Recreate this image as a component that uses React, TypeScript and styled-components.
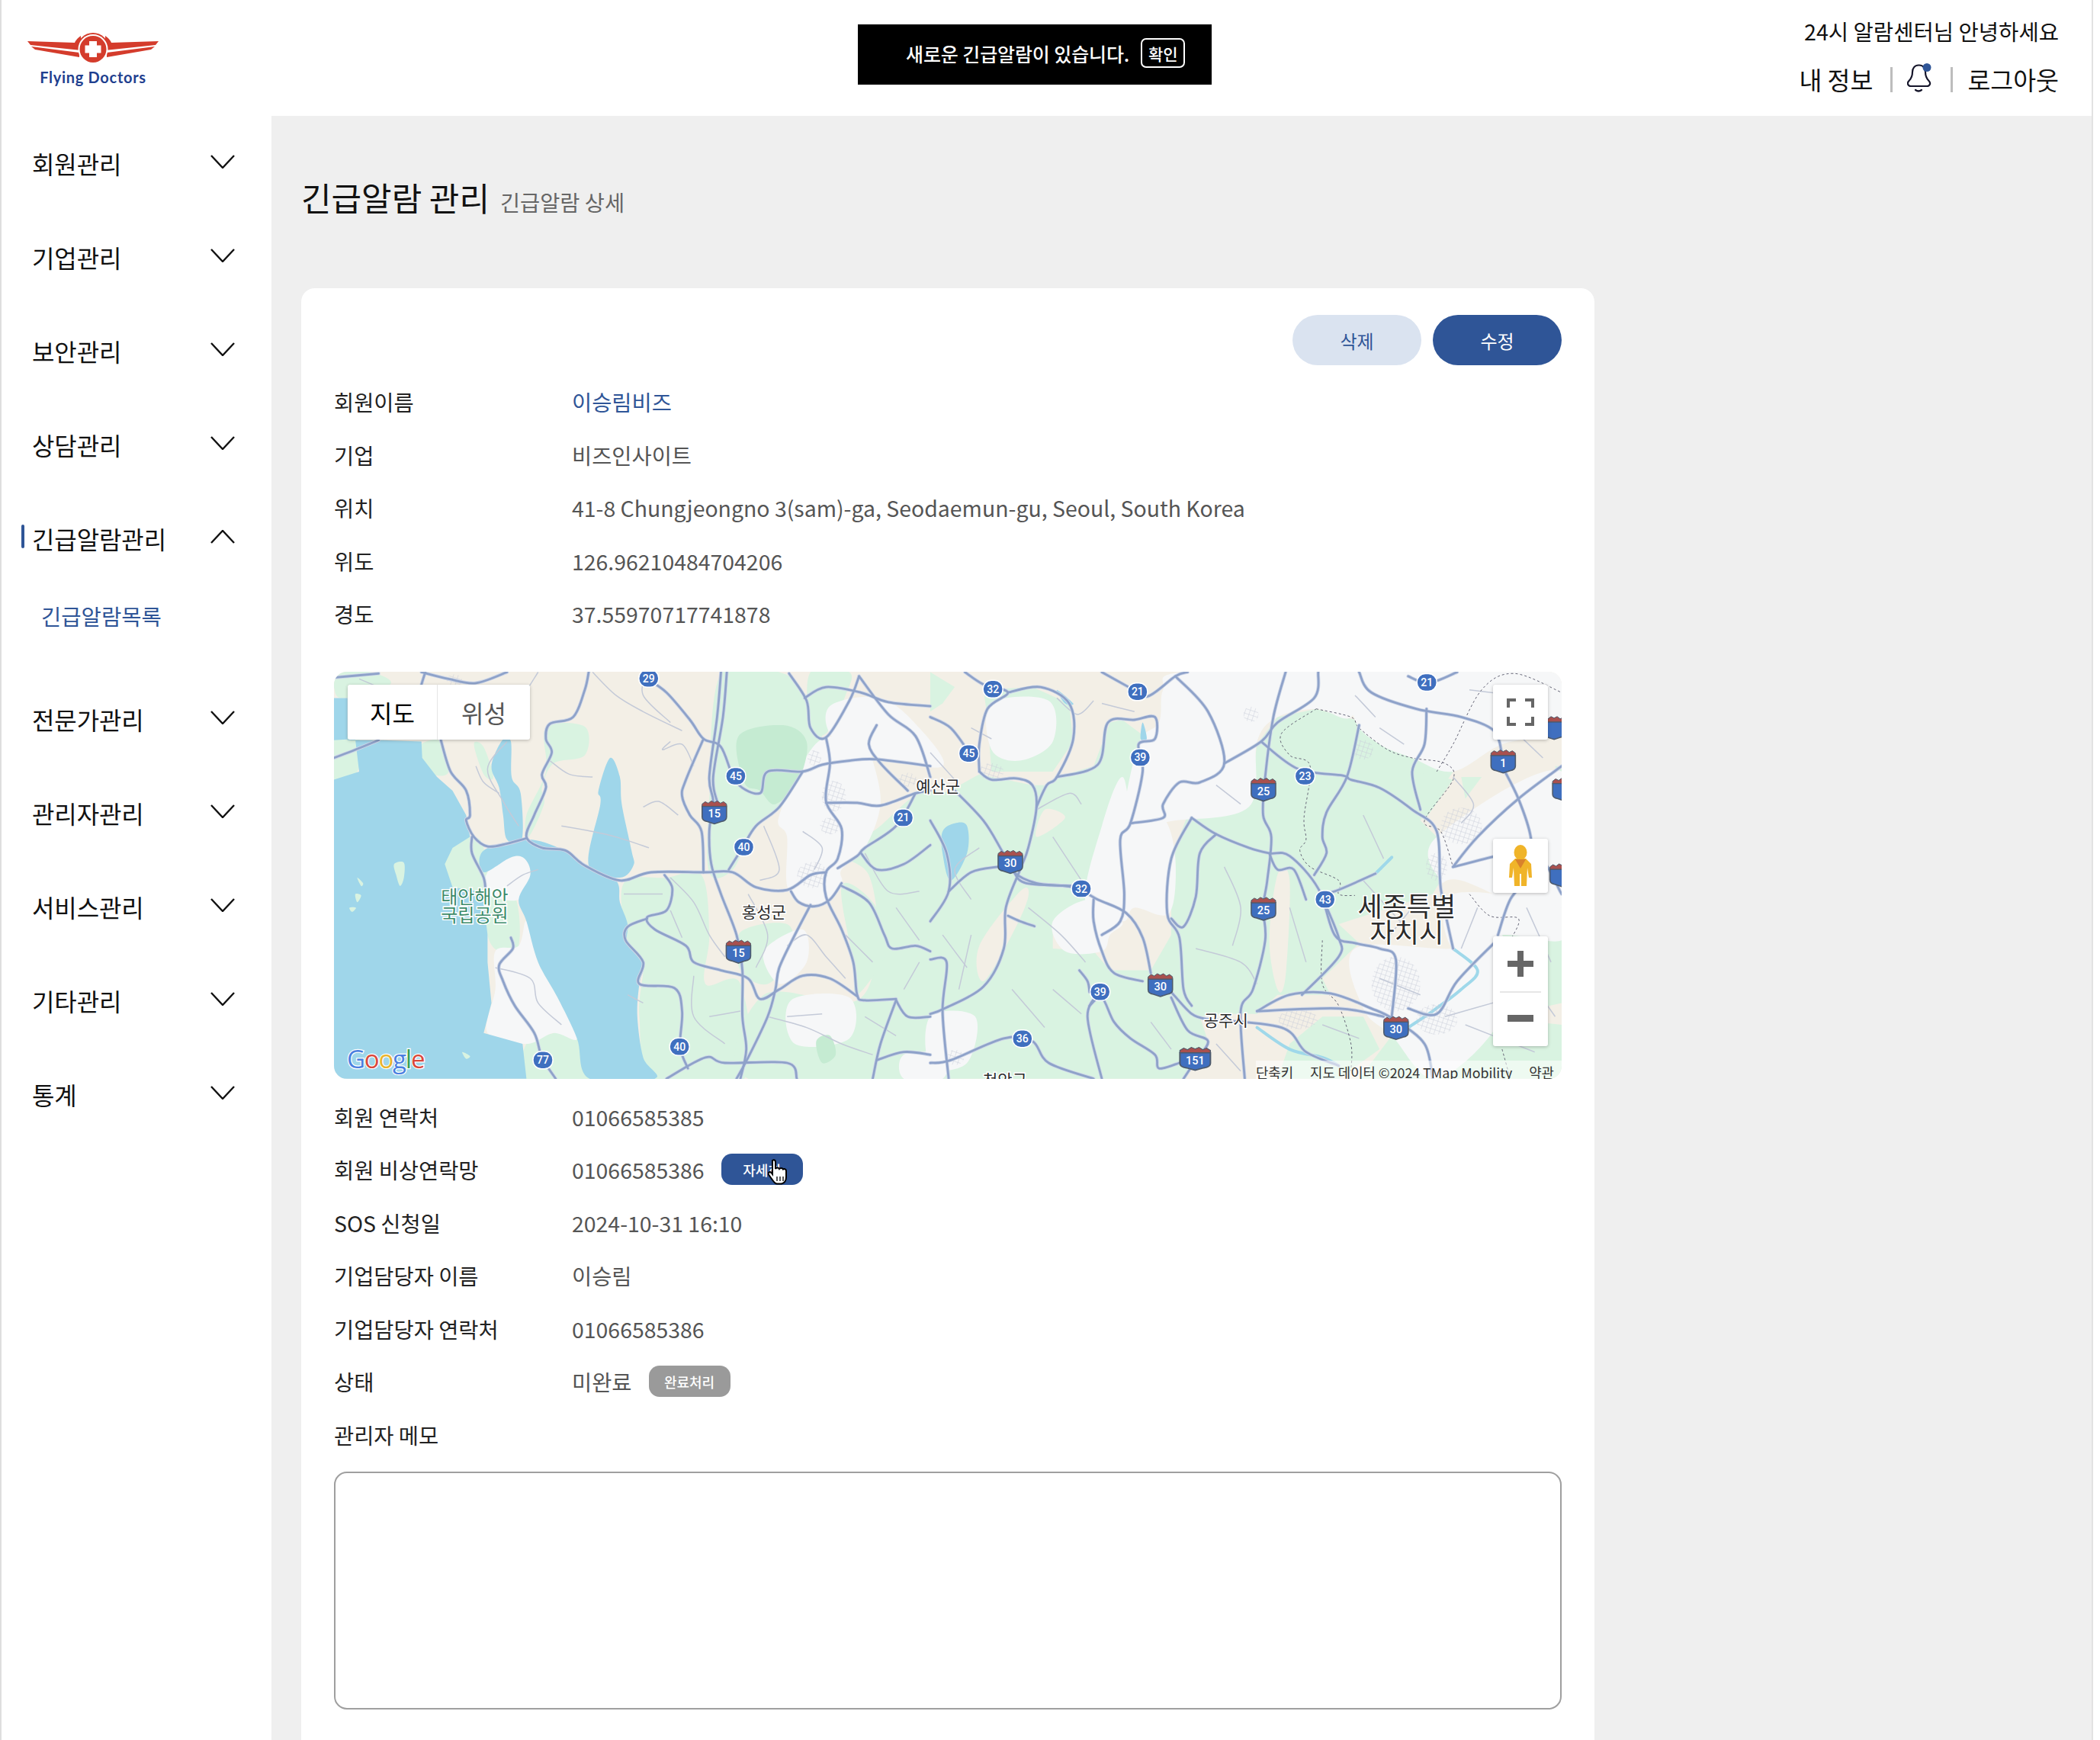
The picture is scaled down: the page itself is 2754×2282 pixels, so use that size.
import React from "react";
import styled, { createGlobalStyle } from "styled-components";

const BLUE = "#2f5597";
const FONT = `"Noto Sans CJK KR", "Noto Sans", sans-serif`;

const Global = createGlobalStyle`
  html, body { margin: 0; padding: 0; background: #fff; }
  body { font-family: ${FONT}; color: #111; }
  * { box-sizing: border-box; }
`;

const Frame = styled.div`
  display: flex;
  width: 2754px;
  height: 2282px;
  overflow: hidden;
  background: #fff;
`;
const Main = styled.div`
  flex: 1;
  min-width: 0;
  display: flex;
  flex-direction: column;
  border-left: 2px solid #dedede;
`;
const ScrollTrack = styled.div`
  width: 11px;
  flex: none;
  background: #fff;
  border-left: 2px solid #e2e2e2;
`;

/* header */
const Header = styled.header`
  height: 152px;
  flex: none;
  display: grid;
  grid-template-columns: 1123px 464px 1fr;
  background: #fff;
`;
const Logo = styled.div`
  display: flex;
  flex-direction: column;
  align-items: flex-start;
  padding: 38px 0 0 32px;
`;
const LogoMark = styled.svg`
  display: block;
  width: 176px;
  height: 52px;
`;
const LogoText = styled.div`
  width: 176px;
  margin-top: 0;
  text-align: center;
  font-family: Lato, "Open Sans", sans-serif;
  font-weight: 700;
  font-size: 20px;
  line-height: 22px;
  letter-spacing: 0.7px;
  color: #1f3f8f;
`;
const Banner = styled.div`
  margin-top: 32px;
  height: 79px;
  background: #000;
  color: #fff;
  display: flex;
  align-items: center;
  padding: 0 0 4px 63px;
  gap: 15px;
  font-size: 25px;
  font-weight: 500;
  letter-spacing: -0.1px;
`;
const BannerButton = styled.button`
  width: 58px;
  height: 39px;
  padding: 0;
  background: #000;
  border: 2px solid #fff;
  border-radius: 7px;
  color: #fff;
  font-family: ${FONT};
  font-size: 21px;
  font-weight: 500;
`;
const UserBox = styled.div`
  display: flex;
  flex-direction: column;
  align-items: flex-end;
  padding: 20px 43px 0 0;
`;
const Greeting = styled.div`
  font-size: 28.6px;
  line-height: 42px;
`;
const UserLinks = styled.div`
  margin-top: 20px;
  display: flex;
  align-items: center;
  font-size: 32.5px;
  line-height: 44px;
`;
const Divider = styled.span`
  width: 3px;
  height: 33px;
  background: #bdbdbd;
  margin: 0 19px 0 23px;
`;
const BellIcon = styled.svg`
  display: block;
  width: 34px;
  height: 40px;
  margin: -2px 0 0 0;
`;

/* body */
const Body = styled.div`
  flex: 1;
  display: flex;
  min-height: 0;
`;
const Sidebar = styled.nav`
  width: 354px;
  flex: none;
  background: #fff;
`;
const NavRow = styled.div<{ $active?: boolean }>`
  position: relative;
  height: 123px;
  display: flex;
  align-items: center;
  justify-content: space-between;
  padding: 1px 48px 0 40px;
  font-size: 32px;
  color: #111;
  letter-spacing: -0.1px;
  &::before {
    content: "";
    display: ${(p) => (p.$active ? "block" : "none")};
    position: absolute;
    left: 26px;
    top: 44px;
    width: 4px;
    height: 31px;
    border-radius: 2px;
    background: ${BLUE};
  }
`;
const Chevron = styled.svg`
  display: block;
  width: 32px;
  height: 18px;
  margin-top: -5px;
  fill: none;
  stroke: #111;
  stroke-width: 2.4;
`;
const SubList = styled.div`
  height: 114px;
  padding: 20px 0 0 52px;
`;
const SubItem = styled.div`
  font-size: 28.6px;
  line-height: 42px;
  color: ${BLUE};
`;

const Content = styled.main`
  flex: 1;
  min-width: 0;
  background: #efefef;
  padding: 0 0 0 39px;
`;
const TitleRow = styled.div`
  height: 226px;
  display: flex;
  align-items: baseline;
  gap: 14px;
  padding-top: 75px;
`;
const Title = styled.h1`
  margin: 0;
  font-size: 43px;
  font-weight: 400;
  line-height: 62px;
  color: #111;
`;
const SubTitle = styled.span`
  font-size: 28.4px;
  color: #666;
`;
const Card = styled.section`
  width: 1696px;
  min-height: 2000px;
  background: #fff;
  border-radius: 18px;
  padding: 35px 43px 0;
`;
const Actions = styled.div`
  display: flex;
  justify-content: flex-end;
  gap: 15px;
  margin-bottom: 13px;
`;
const PillButton = styled.button<{ $primary?: boolean }>`
  width: 169px;
  height: 66px;
  border: 0;
  border-radius: 33px;
  font-family: ${FONT};
  font-size: 24px;
  background: ${(p) => (p.$primary ? BLUE : "#dae3f0")};
  color: ${(p) => (p.$primary ? "#fff" : BLUE)};
`;
const Row = styled.div`
  height: 69.5px;
  display: grid;
  grid-template-columns: 312px 1fr;
  align-items: center;
  font-size: 28.45px;
`;
const Label = styled.div`
  color: #222;
`;
const Value = styled.div`
  display: flex;
  align-items: center;
  gap: 22px;
  color: #555;
`;
const NameLink = styled.span`
  color: ${BLUE};
`;
const SmallButton = styled.button<{ $gray?: boolean }>`
  position: relative;
  width: 107px;
  height: 41px;
  padding: 0;
  border: 0;
  border-radius: 14px;
  font-family: ${FONT};
  font-size: 18px;
  font-weight: 500;
  color: #fff;
  background: ${(p) => (p.$gray ? "#9a9a9a" : BLUE)};
`;
const HandCursor = styled.svg`
  position: absolute;
  left: 61px;
  top: 7px;
  width: 28px;
  height: 34px;
`;
const MemoBox = styled.textarea`
  display: block;
  width: 100%;
  height: 312px;
  margin-top: 14px;
  border: 2px solid #9f9f9f;
  border-radius: 17px;
  background: #fff;
  resize: none;
`;

/* map */
const MapBox = styled.div`
  position: relative;
  height: 534px;
  margin: 41px 0 15px;
  border-radius: 17px;
  overflow: hidden;
  background: #f3efe6;
`;
const MapSvg = styled.svg`
  display: block;
  width: 100%;
  height: 100%;
`;
const Area = styled.path<{ $fill: string }>`
  fill: ${(p) => p.$fill};
  stroke: none;
`;
const RoadCase = styled.path`
  fill: none;
  stroke: #cfd7e8;
  stroke-width: 4.6;
  stroke-linecap: round;
`;
const RoadLine = styled.path`
  fill: none;
  stroke: #8ea2c9;
  stroke-width: 2.8;
  stroke-linecap: round;
`;
const MinorRoad = styled.path`
  fill: none;
  stroke: #c4cad8;
  stroke-width: 1.5;
`;
const BoundaryLine = styled.path`
  fill: none;
  stroke: #667;
  stroke-width: 1;
  stroke-dasharray: 3 3;
`;
const RiverLine = styled.path`
  fill: none;
  stroke: #9fd8ea;
  stroke-width: 4;
  stroke-linecap: round;
`;
const ShieldNumber = styled.text<{ $size?: number }>`
  font-family: Roboto, sans-serif;
  font-weight: 500;
  font-size: ${(p) => p.$size ?? 14}px;
  fill: #fff;
  text-anchor: middle;
`;
const PlaceLabel = styled.text<{ $size: number; $color?: string }>`
  font-family: ${FONT};
  font-size: ${(p) => p.$size}px;
  fill: ${(p) => p.$color ?? "#2b2b2b"};
  stroke: #fff;
  stroke-width: 3px;
  paint-order: stroke;
  text-anchor: middle;
`;
const GoogleMark = styled.text`
  font-family: "Open Sans", Roboto, sans-serif;
  font-size: 33px;
  font-weight: 500;
  stroke: #fff;
  stroke-width: 2.5px;
  paint-order: stroke;
  letter-spacing: -1.2px;
`;
const MapTypeBar = styled.div`
  position: absolute;
  left: 18px;
  top: 17px;
  height: 72px;
  display: flex;
  background: #fff;
  border-radius: 3px;
  box-shadow: 0 1px 4px rgba(0, 0, 0, 0.25);
`;
const MapType = styled.div<{ $on?: boolean }>`
  width: ${(p) => (p.$on ? 118 : 121)}px;
  display: flex;
  align-items: center;
  justify-content: center;
  font-size: 32px;
  color: ${(p) => (p.$on ? "#000" : "#565656")};
  border-right: ${(p) => (p.$on ? "1px solid #e6e6e6" : "0")};
`;
const MapControl = styled.div<{ $top: number; $h: number }>`
  position: absolute;
  left: 1520px;
  top: ${(p) => p.$top}px;
  width: 72px;
  height: ${(p) => p.$h}px;
  background: #fff;
  border-radius: 3px;
  box-shadow: 0 1px 4px rgba(0, 0, 0, 0.25);
  display: flex;
  flex-direction: column;
  align-items: center;
  justify-content: center;
`;
const ZoomStep = styled.div`
  width: 100%;
  flex: 1;
  display: flex;
  align-items: center;
  justify-content: center;
  & + & {
    position: relative;
    &::before {
      content: "";
      position: absolute;
      left: 9px;
      right: 9px;
      top: 0;
      height: 2px;
      background: #e6e6e6;
    }
  }
`;
const Attribution = styled.div`
  position: absolute;
  right: 0;
  bottom: 0;
  width: 401px;
  height: 24px;
  padding: 7px 10px 0 0;
  display: flex;
  justify-content: space-between;
  align-items: center;
  background: rgba(255, 255, 255, 0.55);
  font-size: 17.8px;
  color: #333;
  white-space: nowrap;
`;

/* ---------- map geometry ---------- */
type P = [number, number];
const fa = (x: number, y: number): P => [x / 1.96 - 18, y / 2.8 - 12];
const fb = (x: number, y: number): P => [x / 1.867 + 782, y / 2.8 - 12];
const S = (x: number, y: number): P => [(x - 249) * 1.7564, (y - 502) * 1.7564];
const parse = (s: string, f: (x: number, y: number) => P): P[] =>
  s.trim().split(/\s+/).map((t) => {
    const [x, y] = t.split(",").map(Number);
    return f(x, y);
  });
const curve = (pts: P[], closed = false): string => {
  const n = pts.length;
  const at = (i: number): P => (closed ? pts[(i + n) % n] : pts[Math.max(0, Math.min(n - 1, i))]);
  let d = `M${pts[0][0].toFixed(1)} ${pts[0][1].toFixed(1)}`;
  const segs = closed ? n : n - 1;
  for (let i = 0; i < segs; i++) {
    const p0 = at(i - 1), p1 = at(i), p2 = at(i + 1), p3 = at(i + 2);
    const c1x = p1[0] + (p2[0] - p0[0]) / 6, c1y = p1[1] + (p2[1] - p0[1]) / 6;
    const c2x = p2[0] - (p3[0] - p1[0]) / 6, c2y = p2[1] - (p3[1] - p1[1]) / 6;
    d += `C${c1x.toFixed(1)} ${c1y.toFixed(1)} ${c2x.toFixed(1)} ${c2y.toFixed(1)} ${p2[0].toFixed(1)} ${p2[1].toFixed(1)}`;
  }
  return closed ? d + "Z" : d;
};
const poly = (pts: P[]) => "M" + pts.map((p) => `${p[0].toFixed(1)} ${p[1].toFixed(1)}`).join("L") + "Z";

const GREEN = "#d9f3e1";
const GREEN2 = "#c5ebd2";
const WHITE = "#f6f7f8";
const WATER = "#9fd6ea";

const greensA = [
  "35,280 100,280 95,400 35,430",
  "35,35 130,35 180,80 60,130 35,90",
  "320,680 390,640 420,680 425,830 340,840 320,760",
  "260,300 310,290 330,400 290,410 262,350",
  "395,300 420,310 445,420 420,410",
  "580,240 680,235 680,340 600,370 570,460 575,520 535,640 530,560 580,400",
  "780,810 890,790 980,780 1000,1000 990,1180 1080,1180 1090,1528 860,1528 820,1300 830,1100 790,1020",
  "1030,40 1190,40 1260,150 1290,290 1260,410 1190,520 1110,620 1060,760 1000,770 1000,500",
  "1080,990 1200,960 1210,1070 1150,1180 1080,1130",
  "1340,700 1420,620 1600,520 1600,1528 1100,1528 1140,1220 1380,1240 1430,1000 1410,780",
  "1340,820 1420,880 1460,1040 1380,1220 1370,1100",
  "1260,35 1360,35 1350,120 1300,260 1260,230",
  "530,1400 600,1360 650,1340 692,1528 530,1528",
  "430,850 500,860 510,1040 460,1060 430,1000",
];
const darkGreensA = [
  "1075,270 1190,230 1250,290 1230,430 1170,520 1130,470 1090,440",
  "1275,1390 1310,1370 1325,1440 1290,1470",
];
const whitesA = [
  "1180,560 1280,290 1400,300 1420,360 1440,520 1400,680 1340,760 1340,810 1300,880 1240,880 1200,820 1200,640",
  "1310,160 1440,130 1540,240 1600,380 1440,350 1320,280",
  "1140,1060 1240,980 1250,1100 1180,1180",
  "1210,1240 1360,1230 1360,1380 1220,1400",
  "1500,1440 1600,1440 1600,1528 1500,1528",
  "450,1060 510,1040 530,950 560,1100 610,1230 660,1380 600,1360 530,1400 430,1360 450,1200",
  "430,770 490,715 525,720 540,780 510,870 430,850",
];
const watersA = [
  "35,130 70,130 70,285 160,285 260,290 262,350 300,420 340,470 375,560 385,640 340,680 320,740 340,825 405,840 420,880 430,1000 430,1100 440,1250 420,1360 520,1400 530,1528 35,1528 35,430 100,400 90,280 35,285",
];
const waterPolysA = [
  "420,690 530,650 620,685 680,740 760,800 770,880 790,960 790,1030 830,1110 820,1180 815,1300 830,1450 860,1528 692,1528 660,1380 610,1230 560,1100 530,950 510,870 540,780 525,720 490,715 420,770",
  "468,285 490,290 492,420 515,480 518,650 480,650 470,560 460,460 440,380",
  "745,350 770,420 775,520 800,690 805,745 770,790 690,745 720,520 715,470",
];
const islandsA = [
  "190,740 215,735 215,790 205,820 195,780",
  "95,790 110,810 105,820",
  "90,850 105,855 95,880",
  "75,900 92,900 82,915",
  "365,1430 385,1445 375,1455",
];
const greensB = [
  "0,500 60,460 120,410 250,450 280,450 310,420 400,380 440,220 470,210 550,300 520,340 490,590 465,650 475,850 380,880 300,950 300,1050 400,1060 440,1130 540,1130 590,1000 590,720 640,520 780,520 800,300 850,200 945,170 1040,210 1100,300 1180,350 1280,400 1200,580 1240,640 1250,800 1230,850 1000,960 1050,1030 960,1160 980,1220 850,1220 800,1290 700,1290 660,1300 680,1390 620,1528 0,1528",
  "130,100 250,90 340,150 350,290 300,400 150,400 140,200",
  "0,35 60,90 30,150 0,180",
  "1400,950 1546,1020 1546,1250 1400,1300",
  "1350,1300 1546,1330 1546,1528 1240,1528",
  "1130,1370 1240,1528 1050,1528",
  "960,1300 1060,1300 1100,1420 1000,1528 850,1528 880,1400",
  "1180,400 1280,430 1210,580 1180,530",
  "1300,420 1350,420 1310,500",
  "1530,380 1546,380 1546,540",
];
const whitesB = [
  "150,150 290,140 300,290 220,360 150,320",
  "470,420 500,590 570,570 600,720 585,920 500,900 470,950 380,880 420,600",
  "300,950 390,870 470,950 440,1000 420,1060 330,1060",
  "620,35 1050,35 1030,200 945,170 850,200 800,290 780,530 600,580 480,590 510,300 560,220 570,100",
  "1050,35 1546,35 1546,240 1400,300 1280,400 1180,350 1100,300 1040,210",
  "1240,640 1546,400 1546,900 1300,800 1250,800",
  "1280,850 1546,900 1546,1020 1400,1000 1280,1050",
  "1040,1050 1280,1050 1400,1000 1400,1300 1240,1528 1130,1370 1060,1270",
  "0,1300 110,1300 90,1470 0,1480",
];
const beigesB = [
  "220,840 240,860 200,1000 130,1170 120,1040",
  "280,540 330,570 260,640",
  "850,780 880,800 870,1150 850,1200 830,1020",
  "700,1340 800,1380 830,1528 680,1528",
];
const waterPolysB = [
  "30,620 60,590 90,600 90,700 50,800 30,700",
  "310,100 350,150 330,150",
  "520,220 530,280 515,280",
];
const riversB = [
  "1100,760 1130,715 1090,775",
  "1170,1340 1230,1280 1300,1200 1340,1130 1280,1050",
  "800,1340 880,1420 960,1450 1000,1480",
];
const majorA = [
  "1030,35 1020,200 1000,420 1010,510 1000,620 1005,740 1030,850 1070,1000 1085,1130 1085,1300 1095,1420 1080,1528",
  "1045,35 1035,200 1010,420 1020,510",
  "690,35 680,100 650,200 590,225 580,280 595,330 570,410 580,460 550,560 530,640 570,680 630,690 680,745 770,800 850,770 985,770 1060,770 1120,825 1200,835 1260,780 1300,770",
  "310,285 335,400 375,470 385,560 375,580 395,640 430,675 480,665 530,645",
  "390,640 390,700 420,790 425,850",
  "490,1010 495,1050 460,1110 470,1170 500,1260 550,1360 570,1450 605,1528",
  "840,60 890,110 950,210 985,280 1030,310 1070,440 1130,480 1150,400 1240,400 1290,375 1360,360 1430,355 1568,380",
  "985,280 940,430 930,490 950,560 980,620 985,770",
  "1240,400 1180,530 1120,600 1085,680 1050,760",
  "1205,40 1250,140 1260,240 1300,275 1360,140 1385,50",
  "1245,130 1300,90 1390,110 1460,145 1568,160",
  "1385,50 1460,190 1530,270 1568,420",
  "1430,230 1410,300 1440,370 1510,470",
  "1300,275 1310,370 1300,510 1340,610 1330,720 1300,770 1300,860 1340,980 1370,1100 1380,1220 1400,1240 1480,1235",
  "1300,515 1380,515 1440,525 1530,480 1568,470",
  "1530,480 1480,600 1400,680 1380,710 1330,755",
  "1340,820 1410,880 1450,1000 1470,1050 1530,1040 1568,1060",
  "1210,840 1230,880 1270,895 1310,870 1340,810",
  "1260,890 1220,1000 1180,1120 1170,1200 1150,1300 1100,1450 1070,1528",
  "840,940 790,970 785,1020 830,1100 820,1180 910,1195 930,1280 925,1410 945,1490",
  "885,780 905,830 890,910 840,935 860,980 940,1040 960,1100 1030,1130 1100,1160 1130,1235 1180,1200 1240,1150 1310,1160 1380,1225",
  "1480,1240 1510,1300 1568,1300",
  "1480,1240 1440,1400 1420,1528",
  "890,1528 990,1450 1040,1470 1200,1470 1225,1528",
  "1430,1460 1500,1430 1568,1440",
  "1390,700 1430,760 1500,740 1568,670",
  "35,350 90,320 150,285",
  "35,55 150,40",
  "260,35 330,60 400,75 480,35",
  "270,35 260,80",
];
const majorB = [
  "0,200 50,240 95,330",
  "120,400 150,430 210,425 250,450 260,530 240,680 220,760 185,900 180,1050 130,1190 35,1270 0,1290",
  "190,110 270,90 340,150 350,280 310,420 285,450 260,530",
  "85,35 130,80 190,110 140,170 120,300 120,400",
  "310,420 410,375 435,220 500,210 550,200 550,280 510,300 520,400 490,590 465,650 475,850 465,950 420,1000",
  "420,35 480,85 530,125 600,50 630,35",
  "600,50 680,180 720,370 660,440 610,440 570,520 570,570 490,590",
  "60,470 130,580 175,690 205,770 260,810 350,825 410,870 480,920 520,1010 540,1140",
  "205,770 235,810 350,820",
  "400,870 400,950 420,1060 450,1140 520,1170",
  "590,1210 640,1290 680,1310",
  "640,570 700,630 780,680 830,700 880,710 950,830 990,1000 1040,1030 1100,1050 1140,1090 1130,1300",
  "640,570 590,720 580,920 610,1010 620,1200 640,1260",
  "700,630 660,700 650,860 620,970 590,940",
  "870,35 840,200 820,420 815,560 835,640 825,800 815,900 820,1020 790,1200 760,1280 770,1528",
  "950,35 940,130 850,220 810,290 720,370",
  "810,290 900,390 1010,415 1030,430 1100,460 1180,540 1240,620 1250,830 1280,1050",
  "830,700 850,760 890,760 920,870",
  "950,850 990,840 1090,775",
  "965,880 1000,1010 1000,1080 910,1220",
  "800,1280 880,1220 980,1215 1080,1270 1135,1310 1210,1400 1230,1528",
  "1050,35 1080,110 1190,170 1300,200 1380,250 1400,340",
  "1050,230 1020,420 970,550 960,640 970,700 940,780",
  "1215,170 1210,300 1180,400 1200,540",
  "1290,35 1220,75 1170,50",
  "1400,380 1440,500 1470,640 1470,770 1420,870 1390,1000",
  "1546,380 1440,500 1340,640 1280,750",
  "1546,850 1470,700 1280,750",
  "1380,1030 1290,1170 1240,1290 1170,1270",
  "800,1280 1000,1270 1110,1300",
  "0,1090 40,1100 30,1280 45,1528",
  "0,580 40,700 45,840 0,950",
  "45,840 100,770 165,750",
  "0,1470 50,1460 180,1380 250,1390 290,1470 400,1528",
  "390,1260 420,1230 450,1320 490,1380 550,1440 560,1490 610,1470",
  "415,1210 385,1300 420,1528",
  "590,1230 630,1350 680,1390 650,1460 620,1528",
  "680,1310 860,1340 920,1430 1000,1480",
  "190,930 220,950 255,968",
  "365,1130 385,1170 390,1210",
];
const minorA = [
  "900,290 880,320 930,300 960,380", "840,35 830,120 900,220", "700,35 760,120 830,180 930,250",
  "560,35 520,130 500,210", "480,290 430,390 470,510 510,600", "590,360 640,410 700,420",
  "620,600 700,620 760,640 845,680", "830,530 870,510 920,560", "1140,600 1180,760 1130,800",
  "900,790 960,880 1000,1000 1040,1080", "900,910 930,1010", "1200,1040 1250,1000 1300,1080 1350,1160",
  "1240,620 1290,680 1270,760", "1480,900 1540,1020", "1400,700 1460,840 1540,840",
  "1150,1300 1250,1340 1340,1400 1420,1440", "1000,1300 1080,1280", "960,1150 960,1300 1040,1400",
  "450,1120 540,1160 560,1250 620,1330", "480,820 520,780 560,760", "780,850 880,850", "790,1220 830,1250",
  "100,60 200,120", "400,380 420,440 460,480", "1100,850 1150,1000 1120,1120", "1200,1300 1290,1290",
  "1400,1300 1480,1370", "1350,1000 1420,1100", "1540,1100 1500,1200",
];
const minorB = [
  "0,330 60,430", "100,240 150,280", "310,130 360,190 400,140", "420,150 500,180", "260,540 340,480 370,520",
  "120,680 60,760 100,870", "240,900 320,1000 380,1100", "100,1000 70,1200", "300,1200 370,1290", "200,1200 280,1340",
  "650,1050 760,1100 800,1180", "720,750 760,900 740,1040", "880,900 920,1100", "1060,560 1110,720", "1060,800 1150,950",
  "1120,1010 1180,900", "1280,420 1330,520 1300,590", "1090,200 1040,120", "1100,240 1160,300", "1320,100 1480,130",
  "1430,250 1500,350", "1340,900 1300,1050", "1460,900 1520,1100", "1460,1150 1530,1300", "700,1400 760,1500",
  "960,1330 1050,1380", "1100,1160 1200,1220", "1260,1300 1400,1240", "1310,1330 1480,1430", "540,1320 590,1420",
  "30,1000 90,1120", "300,640 370,800", "700,450 760,520",
];
const boundariesB = [
  "945,170 860,260 880,340 930,380 915,570 920,650 905,690 930,750 1000,800 1000,850 1040,855",
  "960,1020 960,1180 1000,1260 1030,1400 1030,1500",
  "945,170 1030,200 1050,240 1120,320 1180,350 1260,370 1280,430 1210,580 1250,620 1280,750",
  "1240,400 1280,300 1350,100 1430,40 1546,110",
  "1320,850 1370,930 1440,940 1420,1020",
  "1400,1420 1420,1528",
];
const towns: { p: P; rx: number; ry: number }[] = [
  { p: fa(1320, 490), rx: 16, ry: 20 }, { p: fa(1265, 780), rx: 20, ry: 17 }, { p: fa(1310, 600), rx: 13, ry: 11 },
  { p: fa(345, 65), rx: 10, ry: 8 }, { p: fa(1510, 430), rx: 12, ry: 9 }, { p: fa(1270, 350), rx: 9, ry: 10 },
  { p: fb(150, 400), rx: 16, ry: 11 }, { p: fb(1140, 1180), rx: 32, ry: 36 }, { p: fb(1300, 600), rx: 27, ry: 24 },
  { p: fb(1240, 1310), rx: 27, ry: 20 }, { p: fb(900, 1310), rx: 26, ry: 13 }, { p: fb(785, 190), rx: 10, ry: 10 },
  { p: fb(1060, 320), rx: 13, ry: 13 }, { p: fb(1240, 750), rx: 14, ry: 18 }, { p: fb(60, 1450), rx: 12, ry: 10 },
];
const ovals: [string, number, number][] = [
  ["29", 484, 507], ["32", 741, 515], ["21", 849, 517], ["21", 1065, 510], ["45", 549, 580], ["45", 723, 563],
  ["39", 851, 566], ["23", 974, 580], ["40", 555, 633], ["21", 674, 611], ["32", 807, 664], ["43", 989, 672],
  ["39", 821, 741], ["36", 763, 776], ["40", 507, 782], ["77", 405, 792],
];
const highways: [string, number, number][] = [
  ["15", 533, 607], ["15", 551, 711], ["30", 754, 644], ["25", 943, 590], ["25", 943, 679], ["30", 866, 736],
  ["30", 1042, 768], ["151", 892, 791], ["1", 1122, 569], ["", 1160, 544], ["", 1168, 590], ["", 1166, 654],
];

const Oval = ({ n, x, y }: { n: string; x: number; y: number }) => {
  const [cx, cy] = S(x, y);
  return (
    <g transform={`translate(${cx} ${cy})`}>
      <rect x={-13} y={-11.5} width={26} height={23} rx={11} fill="#3f6fbf" stroke="#fff" strokeWidth={1.5} />
      <ShieldNumber y={5}>{n}</ShieldNumber>
    </g>
  );
};
const Highway = ({ n, x, y }: { n: string; x: number; y: number }) => {
  const [cx, cy] = S(x, y);
  const wide = n.length > 2 ? 1.25 : 1;
  return (
    <g transform={`translate(${cx} ${cy})`}>
      <g transform={`scale(${wide} 1)`}>
        <path d="M-16 -8 L-16 6 Q-16 11 -9 12 L0 15 L9 12 Q16 11 16 6 L16 -8 Z" fill="#3f6fbf" stroke="#4d5a6c" strokeWidth={1.6} />
        <path d="M-16 -8 L-16 -11 L-12 -14 L-8 -12 L-4 -15 L0 -13 L4 -15 L8 -12 L12 -14 L16 -11 L16 -8 Z" fill="#a9504e" stroke="#4d5a6c" strokeWidth={1} />
      </g>
      <ShieldNumber y={7} $size={14.5}>{n}</ShieldNumber>
    </g>
  );
};

const MapDrawing = () => {
  const tex = (lines: string[], f: (x: number, y: number) => P) => lines.map((l) => curve(parse(l, f)));
  const majors = [...tex(majorA, fa), ...tex(majorB, fb)];
  const minors = [...tex(minorA, fa), ...tex(minorB, fb)];
  const [pk1x, pk1y] = S(354, 680);
  const [hs, hy] = S(570, 686);
  const [ys, yy] = S(700, 592);
  const [gs, gy] = S(915, 767);
  const [sj, sy] = S(1050, 685);
  const [sj2, sy2] = S(1050, 704);
  const [ca, cy2] = S(750, 811);
  return (
    <MapSvg viewBox="0 0 1610 534" preserveAspectRatio="none">
      <defs>
        <pattern id="town" width="6" height="6" patternUnits="userSpaceOnUse" patternTransform="rotate(18)">
          <path d="M0 0H6M0 0V6" stroke="#c9ced9" strokeWidth="1" fill="none" />
        </pattern>
      </defs>
      {greensA.map((s, i) => <Area key={"ga" + i} $fill={GREEN} d={curve(parse(s, fa), true)} />)}
      {greensB.map((s, i) => <Area key={"gb" + i} $fill={GREEN} d={poly(parse(s, fb))} />)}
      {beigesB.map((s, i) => <Area key={"bb" + i} $fill="#f3efe6" d={curve(parse(s, fb), true)} />)}
      {whitesA.map((s, i) => <Area key={"wa" + i} $fill={WHITE} d={curve(parse(s, fa), true)} />)}
      {whitesB.map((s, i) => <Area key={"wb" + i} $fill={WHITE} d={curve(parse(s, fb), true)} />)}
      {darkGreensA.map((s, i) => <Area key={"da" + i} $fill={GREEN2} d={curve(parse(s, fa), true)} />)}
      {watersA.map((s, i) => <Area key={"wt" + i} $fill={WATER} d={poly(parse(s, fa))} />)}
      {waterPolysA.map((s, i) => <Area key={"wp" + i} $fill={WATER} d={curve(parse(s, fa), true)} />)}
      {islandsA.map((s, i) => <Area key={"is" + i} $fill={GREEN} d={curve(parse(s, fa), true)} />)}
      {waterPolysB.map((s, i) => <Area key={"wq" + i} $fill={WATER} d={curve(parse(s, fb), true)} />)}
      {riversB.map((s, i) => <RiverLine key={"r" + i} d={curve(parse(s, fb))} />)}
      {towns.map((t, i) => <ellipse key={"t" + i} cx={t.p[0]} cy={t.p[1]} rx={t.rx} ry={t.ry} fill="url(#town)" />)}
      {minors.map((d, i) => <MinorRoad key={"m" + i} d={d} />)}
      {boundariesB.map((s, i) => <BoundaryLine key={"bd" + i} d={curve(parse(s, fb))} />)}
      {majors.map((d, i) => <RoadCase key={"c" + i} d={d} />)}
      {majors.map((d, i) => <RoadLine key={"l" + i} d={d} />)}
      {ovals.map(([n, x, y], i) => <Oval key={"o" + i} n={n} x={x} y={y} />)}
      {highways.map(([n, x, y], i) => <Highway key={"h" + i} n={n} x={x} y={y} />)}
      <PlaceLabel $size={24} $color="#3c8b6a" x={pk1x} y={pk1y - 9}>태안해안</PlaceLabel>
      <PlaceLabel $size={24} $color="#3c8b6a" x={pk1x} y={pk1y + 15}>국립공원</PlaceLabel>
      <PlaceLabel $size={21} x={hs} y={hy}>홍성군</PlaceLabel>
      <PlaceLabel $size={21} x={ys} y={yy}>예산군</PlaceLabel>
      <PlaceLabel $size={21} x={gs} y={gy}>공주시</PlaceLabel>
      <PlaceLabel $size={21} x={ca} y={cy2}>천안구</PlaceLabel>
      <PlaceLabel $size={35} x={sj} y={sy}>세종특별</PlaceLabel>
      <PlaceLabel $size={35} x={sj2} y={sy2}>자치시</PlaceLabel>
      <GoogleMark x={17} y={520}>
        <tspan fill="#4a7fe0">G</tspan>
        <tspan fill="#d9483b">o</tspan>
        <tspan fill="#e8b32c">o</tspan>
        <tspan fill="#4a7fe0">g</tspan>
        <tspan fill="#3a9d57">l</tspan>
        <tspan fill="#d9483b">e</tspan>
      </GoogleMark>
    </MapSvg>
  );
};

const ChevronDown = () => (
  <Chevron viewBox="0 0 32 18"><polyline points="1,1 16,17 31,1" /></Chevron>
);
const ChevronUp = () => (
  <Chevron viewBox="0 0 32 18"><polyline points="1,17 16,1 31,17" /></Chevron>
);

const NavItem = ({ label, open, active }: { label: string; open?: boolean; active?: boolean }) => (
  <NavRow $active={active}>
    <span>{label}</span>
    {open ? <ChevronUp /> : <ChevronDown />}
  </NavRow>
);

const Info = ({ label, children }: { label: string; children?: React.ReactNode }) => (
  <Row>
    <Label>{label}</Label>
    <Value>{children}</Value>
  </Row>
);

export default function App() {
  return (
    <Frame>
      <Global />
      <Main>
        <Header>
          <Logo>
            <LogoMark viewBox="14 8 176 52">
              <g fill="#d43c2c">
                <path d="M16 24 L78 26 Q80 21 86 17 L86 36 L20 29 Z" />
                <path d="M21 31 L84 39 L84 45 L26 35 Z" />
                <path d="M188 24 L126 26 Q124 21 118 17 L118 36 L184 29 Z" />
                <path d="M183 31 L120 39 L120 45 L178 35 Z" />
                <path d="M81 34 A21 21 0 0 1 123 34 Z" />
              </g>
              <circle cx="102" cy="34.500" r="19.500" fill="#fff" />
              <circle cx="102" cy="34.500" r="17.500" fill="#d43c2c" />
              <path d="M97 24h10v5.500h5.500v10h-5.500v5.500h-10v-5.500h-5.500v-10h5.500z" fill="#fff" />
            </LogoMark>
            <LogoText>Flying Doctors</LogoText>
          </Logo>
          <Banner>
            <span>새로운 긴급알람이 있습니다.</span>
            <BannerButton>확인</BannerButton>
          </Banner>
          <UserBox>
            <Greeting>24시 알람센터님 안녕하세요</Greeting>
            <UserLinks>
              <span>내 정보</span>
              <Divider />
              <BellIcon viewBox="0 0 34 40" fill="none">
                <path d="M15 2.500c-5 0-8 4-8 9 0 5-1 8-4.500 11.500-3 3-1.500 7 2.500 7h21c4 0 5.500-4 2.500-7-3.500-3.500-4.500-6.500-4.500-11.500 0-5-3-9-8-9z" stroke="#15152a" strokeWidth="2.200" />
                <path d="M11 35q4 3 8 0" stroke="#15152a" strokeWidth="2.200" strokeLinecap="round" />
                <circle cx="26" cy="5.500" r="5.500" fill={BLUE} />
              </BellIcon>
              <Divider />
              <span>로그아웃</span>
            </UserLinks>
          </UserBox>
        </Header>
        <Body>
          <Sidebar>
            <NavItem label="회원관리" />
            <NavItem label="기업관리" />
            <NavItem label="보안관리" />
            <NavItem label="상담관리" />
            <NavItem label="긴급알람관리" open active />
            <SubList><SubItem>긴급알람목록</SubItem></SubList>
            <NavItem label="전문가관리" />
            <NavItem label="관리자관리" />
            <NavItem label="서비스관리" />
            <NavItem label="기타관리" />
            <NavItem label="통계" />
          </Sidebar>
          <Content>
            <TitleRow>
              <Title>긴급알람 관리</Title>
              <SubTitle>긴급알람 상세</SubTitle>
            </TitleRow>
            <Card>
              <Actions>
                <PillButton>삭제</PillButton>
                <PillButton $primary>수정</PillButton>
              </Actions>
              <Info label="회원이름"><NameLink>이승림비즈</NameLink></Info>
              <Info label="기업">비즈인사이트</Info>
              <Info label="위치">41-8 Chungjeongno 3(sam)-ga, Seodaemun-gu, Seoul, South Korea</Info>
              <Info label="위도">126.96210484704206</Info>
              <Info label="경도">37.55970717741878</Info>
              <MapBox>
                <MapDrawing />
                <MapTypeBar>
                  <MapType $on>지도</MapType>
                  <MapType>위성</MapType>
                </MapTypeBar>
                <MapControl $top={17} $h={72}>
                  <svg width="36" height="36" viewBox="0 0 36 36" fill="none" stroke="#666" strokeWidth="4">
                    <path d="M2 12V2h10M24 2h10v10M34 24v10H24M12 34H2V24" />
                  </svg>
                </MapControl>
                <MapControl $top={219} $h={71}>
                  <svg width="32" height="54" viewBox="0 0 32 54">
                    <ellipse cx="16" cy="10" rx="8.500" ry="10" fill="#f0b429" />
                    <path d="M9 18 H23 L30 25 L31 43 H27 L25 30 L24 54 H17 V38 H15 V54 H8 L7 30 L5 43 H1 L2 25 Z" fill="#f0b429" />
                    <path d="M9 19 L16 31 L23 19 Z" fill="#d9822b" />
                  </svg>
                </MapControl>
                <MapControl $top={347} $h={144}>
                  <ZoomStep>
                    <svg width="34" height="34" viewBox="0 0 34 34" fill="#666"><path d="M13 0h8v13h13v8H21v13h-8V21H0v-8h13z" /></svg>
                  </ZoomStep>
                  <ZoomStep>
                    <svg width="34" height="10" viewBox="0 0 34 10" fill="#666"><rect width="34" height="9" /></svg>
                  </ZoomStep>
                </MapControl>
                <Attribution>
                  <span>단축키</span>
                  <span>지도 데이터 ©2024 TMap Mobility</span>
                  <span>약관</span>
                </Attribution>
              </MapBox>
              <Info label="회원 연락처">01066585385</Info>
              <Info label="회원 비상연락망">
                01066585386
                <SmallButton>
                  자세히
                  <HandCursor viewBox="0 0 28 34">
                    <path d="M6 2c2-1.500 4-.5 4 2v9c1-2 4-2 5 0 1-1.500 4-1.500 5 .5 1-1 4-.5 4 2v8c0 4-2 8-6 9h-6c-3 0-4-2-6-5l-5-7c-1.500-2.500 1.500-4.500 3.500-2.500L6 20V4z" fill="#fff" stroke="#000" strokeWidth="2" />
                    <path d="M12 23v6M16 23v6M20 23v6" stroke="#000" strokeWidth="1.300" />
                  </HandCursor>
                </SmallButton>
              </Info>
              <Info label="SOS 신청일">2024-10-31 16:10</Info>
              <Info label="기업담당자 이름">이승림</Info>
              <Info label="기업담당자 연락처">01066585386</Info>
              <Info label="상태">
                미완료
                <SmallButton $gray>완료처리</SmallButton>
              </Info>
              <Info label="관리자 메모" />
              <MemoBox />
            </Card>
          </Content>
        </Body>
      </Main>
      <ScrollTrack />
    </Frame>
  );
}
